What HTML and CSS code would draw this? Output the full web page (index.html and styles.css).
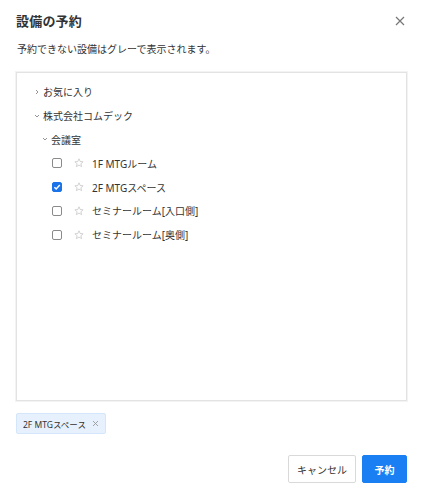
FILE: index.html
```html
<!DOCTYPE html>
<html lang="ja">
<head>
<meta charset="utf-8">
<link rel="stylesheet" href="styles.css">
</head>
<body>
<div class="dialog">
  <div class="header">
    <h1 class="title">設備の予約</h1>
    <svg class="close" width="10" height="10" viewBox="0 0 10 10"><path d="M1 1L9 9M9 1L1 9" stroke="#777" stroke-width="1.2" fill="none"/></svg>
  </div>
  <p class="note">予約できない設備はグレーで表示されます。</p>
  <div class="box">
    <div class="row lv1">
      <svg class="chev" width="6" height="6" viewBox="0 0 6 6"><path d="M2 1L4 3L2 5" stroke="#888" stroke-width="0.9" fill="none"/></svg>
      <span>お気に入り</span>
    </div>
    <div class="row lv1">
      <svg class="chev" width="6" height="6" viewBox="0 0 6 6"><path d="M1 2L3 4L5 2" stroke="#888" stroke-width="0.9" fill="none"/></svg>
      <span>株式会社コムデック</span>
    </div>
    <div class="row lv2">
      <svg class="chev" width="6" height="6" viewBox="0 0 6 6"><path d="M1 2L3 4L5 2" stroke="#888" stroke-width="0.9" fill="none"/></svg>
      <span>会議室</span>
    </div>
    <div class="row lv3">
      <span class="cb"></span>
      <svg class="star" width="10" height="10" viewBox="0 0 10 10"><path d="M5 0.8L6.2 3.5L9.1 3.8L6.9 5.7L7.6 8.6L5 7.1L2.4 8.6L3.1 5.7L0.9 3.8L3.8 3.5Z" stroke="#c8c8c8" stroke-width="0.8" fill="none" stroke-linejoin="round"/></svg>
      <span>1F MTGルーム</span>
    </div>
    <div class="row lv3">
      <span class="cb checked"><svg width="10" height="10" viewBox="0 0 10 10"><path d="M2.4 5.2L4.2 7L7.8 3" stroke="#fff" stroke-width="1.5" fill="none"/></svg></span>
      <svg class="star" width="10" height="10" viewBox="0 0 10 10"><path d="M5 0.8L6.2 3.5L9.1 3.8L6.9 5.7L7.6 8.6L5 7.1L2.4 8.6L3.1 5.7L0.9 3.8L3.8 3.5Z" stroke="#c8c8c8" stroke-width="0.8" fill="none" stroke-linejoin="round"/></svg>
      <span>2F MTGスペース</span>
    </div>
    <div class="row lv3">
      <span class="cb"></span>
      <svg class="star" width="10" height="10" viewBox="0 0 10 10"><path d="M5 0.8L6.2 3.5L9.1 3.8L6.9 5.7L7.6 8.6L5 7.1L2.4 8.6L3.1 5.7L0.9 3.8L3.8 3.5Z" stroke="#c8c8c8" stroke-width="0.8" fill="none" stroke-linejoin="round"/></svg>
      <span>セミナールーム[入口側]</span>
    </div>
    <div class="row lv3">
      <span class="cb"></span>
      <svg class="star" width="10" height="10" viewBox="0 0 10 10"><path d="M5 0.8L6.2 3.5L9.1 3.8L6.9 5.7L7.6 8.6L5 7.1L2.4 8.6L3.1 5.7L0.9 3.8L3.8 3.5Z" stroke="#c8c8c8" stroke-width="0.8" fill="none" stroke-linejoin="round"/></svg>
      <span>セミナールーム[奥側]</span>
    </div>
  </div>
  <div class="tags">
    <span class="tag">2F MTGスペース<svg class="tagx" width="7" height="7" viewBox="0 0 7 7"><path d="M1 1L6 6M6 1L1 6" stroke="#999" stroke-width="0.9" fill="none"/></svg></span>
  </div>
  <div class="footer">
    <button class="btn">キャンセル</button>
    <button class="btn primary">予約</button>
  </div>
</div>
</body>
</html>
```

FILE: styles.css
```css
html, body {
  margin: 0;
  padding: 0;
  background: #fff;
}
body {
  font-family: "Noto Sans", "Noto Sans CJK JP", sans-serif;
  font-size: 10px;
  color: #333;
}
.dialog {
  width: 391px;
  padding: 0 15px 0 16px;
}
.header {
  height: 40px;
  display: flex;
  align-items: center;
  justify-content: space-between;
}
.title {
  margin: 0;
  font-size: 13px;
  font-weight: 700;
  color: #333;
  letter-spacing: 0.2px;
}
.close {
  margin-right: 2px;
  margin-top: 1px;
}
.note {
  margin: 0;
  height: 18px;
  line-height: 18px;
  padding-left: 1px;
  color: #333;
}
.box {
  margin-top: 14px;
  height: 320px;
  border: 1px solid #e3e3e3;
  box-shadow: 0 0 0 1px #f3f3f3;
  padding-top: 7px;
}
.row {
  display: flex;
  align-items: center;
  height: 23.8px;
  color: #333;
}
.lv1 { padding-left: 17px; }
.lv2 { padding-left: 25px; }
.lv3 { padding-left: 35px; }
.chev {
  margin-right: 3px;
}
.cb {
  width: 10px;
  height: 10px;
  border: 1px solid #8a8a8a;
  border-radius: 2px;
  box-sizing: border-box;
  display: flex;
  align-items: center;
  justify-content: center;
}
.cb.checked {
  background: #1a73e8;
  border-color: #1a73e8;
}
.cb svg { flex: none; }
.star {
  margin-left: 12px;
  margin-right: 8px;
}
.tags {
  margin-top: 12px;
  display: flex;
}
.tag {
  display: inline-flex;
  align-items: center;
  height: 21px;
  box-sizing: border-box;
  padding: 0 6px 0 6px;
  background: #e6f1fd;
  border: 1px solid #d4e6fb;
  border-radius: 2px;
  font-size: 8.5px;
  color: #333;
}
.tagx {
  margin-left: 6px;
}
.footer {
  margin-top: 21px;
  display: flex;
  justify-content: flex-end;
  gap: 6px;
}
.btn {
  height: 28px;
  border: 1px solid #d9d9d9;
  border-radius: 2px;
  background: #fff;
  font-family: "Noto Sans", "Noto Sans CJK JP", sans-serif;
  font-size: 10px;
  color: #333;
  padding: 0 8px;
  min-width: 45px;
}
.btn.primary {
  background: #1a7ff2;
  border-color: #1a7ff2;
  color: #fff;
  font-weight: 700;
}
```
